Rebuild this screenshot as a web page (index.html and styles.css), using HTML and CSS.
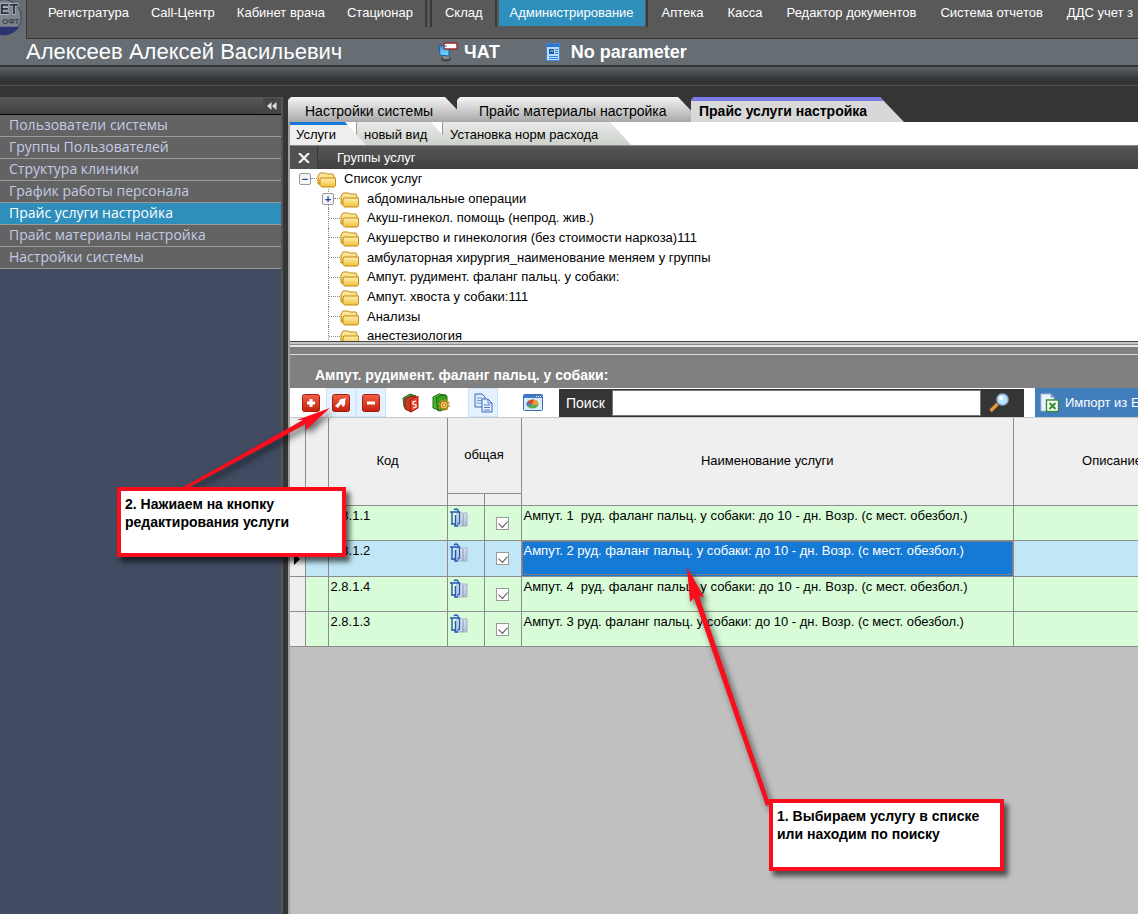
FILE: index.html
```html
<!DOCTYPE html>
<html lang="ru">
<head>
<meta charset="utf-8">
<title>Прайс услуги настройка</title>
<link rel="stylesheet" href="styles.css">
</head>
<body>
<svg class="defs" aria-hidden="true">
  <defs>
    <linearGradient id="gold" x1="0" y1="0" x2="0" y2="1"><stop offset="0" stop-color="#fff0b0"/><stop offset="1" stop-color="#f0c03c"/></linearGradient>
    <linearGradient id="red" x1="0" y1="0" x2="0" y2="1"><stop offset="0" stop-color="#f0604a"/><stop offset="1" stop-color="#c4200c"/></linearGradient>
    <linearGradient id="screen" x1="0" y1="0" x2="0" y2="1"><stop offset="0" stop-color="#2c8fe0"/><stop offset="1" stop-color="#7ce0ff"/></linearGradient>
    <linearGradient id="page" x1="0" y1="0" x2="1" y2="1"><stop offset="0" stop-color="#f4f7fc"/><stop offset="1" stop-color="#a9b9d6"/></linearGradient>
    <symbol id="folder" viewBox="0 0 20 16">
      <path d="M1 12V4l2-3h5l2 1h6l1 2v8z" fill="url(#gold)" stroke="#c58a14"/>
      <path d="M4 6h14.500v7.500l-1 1.500H4.500L3 13.500V7z" fill="url(#gold)" stroke="#c58a14"/>
    </symbol>
    <symbol id="clip" viewBox="0 0 18 20">
      <path d="M7 5h10v13H7z" fill="url(#page)" stroke="#a3b1ca"/><path d="M13 6v12" stroke="#8796b8"/>
      <path d="M2 4v12M0 4h9.500v10q0 2-2 2M5.500 7v10M1 16h4v2h3M4 2q2-2 4 0v2" fill="none" stroke="#2456b4" stroke-width="1.400"/>
    </symbol>
  </defs>
</svg>

<header class="top">
  <svg class="logo" viewBox="0 0 27 38" role="img" aria-label="ВЕТ СОФТ">
    <circle cx="4" cy="17" r="18" fill="#7d848b" stroke="#3a4150"/>
    <path d="M-13 27H20A19 19 0 0 1-10 30z" fill="#2b3470"/>
    <text x="19" y="14" text-anchor="end" class="logo-big">ЕТ</text>
    <text x="20" y="24" text-anchor="end" class="logo-small">ОФТ</text>
  </svg>
  <nav class="menu">
    <a href="#">Регистратура</a><a href="#">Call-Центр</a><a href="#">Кабинет врача</a><a href="#">Стационар</a>
    <span class="sep"></span><span class="sep"></span>
    <a href="#">Склад</a>
    <span class="sep"></span><a href="#" class="current">Администрирование</a><span class="sep"></span>
    <a href="#" class="wide">Аптека</a><a href="#" class="wide">Касса</a><a href="#" class="wide">Редактор документов</a><a href="#" class="wide">Система отчетов</a><a href="#" class="wide">ДДС учет з</a>
  </nav>
</header>
<div class="userbar">
  <strong class="user">Алексеев Алексей Васильевич</strong>
  <button class="ubtn">
    <svg width="20" height="20" viewBox="0 0 20 20"><ellipse cx="8" cy="17" rx="5" ry="2.500" fill="#444"/><path d="M5 13h6v4H5z" fill="#888"/><path d="M1 4l10-1v11l-9-1z" fill="url(#screen)" stroke="#1d5da0"/><rect x="6" y="1" width="13" height="6" rx="1.500" fill="#fff" stroke="#a02a2a" stroke-width="1.400"/><path d="M8 3v2" stroke="#2a5fc0"/></svg>
    ЧАТ</button>
  <button class="ubtn param">
    <svg width="15" height="18" viewBox="0 0 15 18"><path d="M.5.500h13v17H.500z" fill="#b9dcff" stroke="#3f86d8"/><path d="M1 1h12v3H1z" fill="#2f74d0"/><path d="M3 6h5v5H3z" fill="#1c58b0"/><path d="M4 9l2-2 1 2" stroke="#9be05a" fill="none"/><path d="M9 6.500h3M9 8.500h3M9 10.500h3M3 13.500h9M3 15.500h9" stroke="#3b7ed0"/></svg>
    No parameter</button>
</div>
<div class="ribbon"></div>

<div class="work">
  <aside class="side">
    <div class="side-head"><button aria-label="Свернуть"><svg width="10" height="8" viewBox="0 0 10 8"><path d="M4.500 0v8L0 4zM9.500 0v8L5 4z" fill="#ddd"/></svg></button></div>
    <nav class="side-list">
      <a href="#">Пользователи системы</a>
      <a href="#">Группы Пользователей</a>
      <a href="#">Структура клиники</a>
      <a href="#">График работы персонала</a>
      <a href="#" class="current">Прайс услуги настройка</a>
      <a href="#">Прайс материалы настройка</a>
      <a href="#">Настройки системы</a>
    </nav>
  </aside>

  <main class="main">
    <div class="tabs">
      <button class="tab t1">Настройки системы</button>
      <button class="tab t2">Прайс материалы настройка</button>
      <button class="tab t3 active">Прайс услуги настройка</button>
    </div>
    <div class="panel">
      <div class="subtabs">
        <button class="stab s1 active">Услуги</button>
        <button class="stab s2">новый вид</button>
        <button class="stab s3">Установка норм расхода</button>
      </div>
      <div class="group-head">
        <button aria-label="Закрыть"><svg width="12" height="10" viewBox="0 0 12 10"><path d="M1 0l10 10M11 0L1 10" stroke="#eee" stroke-width="2.400"/></svg></button>
        <span>Группы услуг</span>
      </div>
      <div class="tree">
        <ul>
          <li class="root"><button class="pm" aria-label="Свернуть">−</button><i class="dots"></i><svg class="fold"><use href="#folder"/></svg>Список услуг</li>
          <li><button class="pm" aria-label="Развернуть">+</button><i class="dots"></i><svg class="fold"><use href="#folder"/></svg>абдоминальные операции</li>
          <li><i class="dots long"></i><svg class="fold"><use href="#folder"/></svg>Акуш-гинекол. помощь (непрод. жив.)</li>
          <li><i class="dots long"></i><svg class="fold"><use href="#folder"/></svg>Акушерство и гинекология (без стоимости наркоза)111</li>
          <li><i class="dots long"></i><svg class="fold"><use href="#folder"/></svg>амбулаторная хирургия_наименование меняем у группы</li>
          <li><i class="dots long"></i><svg class="fold"><use href="#folder"/></svg>Ампут. рудимент. фаланг пальц. у собаки:</li>
          <li><i class="dots long"></i><svg class="fold"><use href="#folder"/></svg>Ампут. хвоста у собаки:111</li>
          <li><i class="dots long"></i><svg class="fold"><use href="#folder"/></svg>Анализы</li>
          <li><i class="dots long"></i><svg class="fold"><use href="#folder"/></svg>анестезиология</li>
        </ul>
      </div>
      <div class="splitter"></div>
      <h2 class="title">Ампут. рудимент. фаланг пальц. у собаки:</h2>
      <div class="toolbar">
        <button class="tool" aria-label="Добавить"><svg width="18" height="18" viewBox="0 0 18 18"><rect x=".5" y=".5" width="17" height="17" rx="2" fill="url(#red)" stroke="#a81c0c"/><path d="M9 5v8M5 9h8" stroke="#fff" stroke-width="3"/></svg></button>
        <button class="tool hot" aria-label="Редактировать"><svg width="18" height="18" viewBox="0 0 18 18"><rect x=".5" y=".5" width="17" height="17" rx="2" fill="url(#red)" stroke="#a81c0c"/><path d="M3 12l4-4q0-3 3-3l4-1-1 3q1 4-2 6l-2-3-3 4z" fill="#fff"/></svg></button>
        <button class="tool hot" aria-label="Удалить"><svg width="18" height="18" viewBox="0 0 18 18"><rect x=".5" y=".5" width="17" height="17" rx="2" fill="url(#red)" stroke="#a81c0c"/><path d="M5 9h8" stroke="#fff" stroke-width="3"/></svg></button>
        <button class="tool g1" aria-label="Цены"><svg width="18" height="20" viewBox="0 0 18 20"><path d="M1 5l7-4 6 2-5 3v11l-7-3z" fill="#4a9a34" stroke="#2c6a1c"/><path d="M3 6l6-3 5 1-5 3v12l-6-3z" fill="#c83a28" stroke="#8a1c10"/><path d="M8 7l8-4v12l-7 4z" fill="#f0402a" stroke="#a02010"/><path d="M14 8l-3 1v2l3 1v2l-3 1" stroke="#fff" fill="none" stroke-width="1.300"/></svg></button>
        <button class="tool" aria-label="Настройка справочника"><svg width="18" height="20" viewBox="0 0 18 20"><path d="M1 4l6-3 7 1-5 3v13l-8-3z" fill="#46b52c" stroke="#1f6c12"/><path d="M4 5l6-3 5 1v13l-9 2z" fill="#35a020" stroke="#1f6c12"/><circle cx="12" cy="12" r="4.500" fill="none" stroke="#c8921e" stroke-width="2.600" stroke-dasharray="1.800 1.700"/><circle cx="12" cy="12" r="4" fill="#f5c64a" stroke="#a8761a"/><circle cx="12" cy="12" r="1.500" fill="#fff" stroke="#a8761a"/></svg></button>
        <button class="tool hot g2" aria-label="Копировать"><svg width="19" height="20" viewBox="0 0 19 20"><path d="M1 1h7l3 3v10H1z" fill="#dcebfb" stroke="#3a68b8"/><path d="M3 5h5M3 7.500h5M3 10h5" stroke="#6e9ad8"/><path d="M8 6h6l4 4v9H8z" fill="#e6f1fd" stroke="#3a68b8"/><path d="M14 6v4h4M10 12h6M10 14.500h6M10 17h6" stroke="#4a7ac8" fill="none"/></svg></button>
        <button class="tool g3" aria-label="Отчет"><svg width="20" height="17" viewBox="0 0 20 17"><rect x=".5" y=".5" width="19" height="16" rx="1" fill="#dcebf8" stroke="#3a6ab0"/><path d="M1 1h18v3H1z" fill="#3f78c4"/><path d="M13 2.500h1M15 2.500h1M17 2.500h1" stroke="#fff"/><ellipse cx="9.500" cy="10" rx="6" ry="4.500" fill="#5ab04a"/><path d="M9 11L4 8q3-3 7-2.500z" fill="#e04434"/><path d="M9 11l-5 1q-1-2 0-4z" fill="#4a78d8"/><path d="M9 11l2-5.500q5 1 4 5z" fill="#e8a030"/></svg></button>
        <div class="search">
          <label for="q">Поиск</label>
          <input id="q" type="text">
          <button aria-label="Найти"><svg width="20" height="20" viewBox="0 0 20 20"><path d="M1.500 18l7-7" stroke="#e8963a" stroke-width="3.400"/><circle cx="13.500" cy="6.500" r="5.500" fill="#bfe4ff" stroke="#8fb4dc" stroke-width="1.500"/><circle cx="12" cy="5" r="2" fill="#fff"/></svg></button>
        </div>
        <button class="import"><svg width="19" height="20" viewBox="0 0 19 20"><path d="M1 1h10l3 3v14H1z" fill="#eef2fb" stroke="#a9b8dc"/><path d="M11 1v3h3" fill="#8fa4d8" stroke="#7a90c8"/><rect x="6.500" y="7" width="12" height="11.500" fill="#fff" stroke="#2f8f2f" stroke-width="1.400"/><path d="M9.500 10l6 6M15.500 10l-6 6" stroke="#2f8f2f" stroke-width="2"/></svg><span>Импорт из Excel</span></button>
      </div>
      <div class="grid">
        <table>
          <colgroup><col class="c-mark"><col class="c-tag"><col class="c-code"><col class="c-ico"><col class="c-chk"><col class="c-name"><col class="c-desc"></colgroup>
          <thead>
            <tr class="h1"><th rowspan="2"></th><th rowspan="2"></th><th rowspan="2">Код</th><th colspan="2">общая</th><th rowspan="2">Наименование услуги</th><th rowspan="2">Описание</th></tr>
            <tr class="h2"><th></th><th></th></tr>
          </thead>
          <tbody>
            <tr><th></th><td></td><td>2.8.1.1</td><td><svg class="clip"><use href="#clip"/></svg></td><td class="chk"><input type="checkbox" checked aria-label="общая"></td><td>Ампут. 1&nbsp; руд. фаланг пальц. у собаки: до 10 - дн. Возр. (с мест. обезбол.)</td><td></td></tr>
            <tr class="sel"><th class="cur"></th><td></td><td>2.8.1.2</td><td><svg class="clip"><use href="#clip"/></svg></td><td class="chk"><input type="checkbox" checked aria-label="общая"></td><td class="focus">Ампут. 2 руд. фаланг пальц. у собаки: до 10 - дн. Возр. (с мест. обезбол.)</td><td></td></tr>
            <tr><th></th><td></td><td>2.8.1.4</td><td><svg class="clip"><use href="#clip"/></svg></td><td class="chk"><input type="checkbox" checked aria-label="общая"></td><td>Ампут. 4&nbsp; руд. фаланг пальц. у собаки: до 10 - дн. Возр. (с мест. обезбол.)</td><td></td></tr>
            <tr><th></th><td></td><td>2.8.1.3</td><td><svg class="clip"><use href="#clip"/></svg></td><td class="chk"><input type="checkbox" checked aria-label="общая"></td><td>Ампут. 3 руд. фаланг пальц. у собаки: до 10 - дн. Возр. (с мест. обезбол.)</td><td></td></tr>
          </tbody>
        </table>
      </div>
    </div>
  </main>
</div>

<svg class="arrows" viewBox="0 0 1138 914" aria-hidden="true">
  <g fill="#fc0d1b" stroke="none">
    <path d="M330 408L306 430 306 424 184 490 178 490 303 420 297 420z"/>
    <path d="M687 567L704 597 699 596 770 804 766 806 694 598 690 602z"/>
  </g>
</svg>
<div class="note note-edit">2. Нажиаем на кнопку<br>редактирования услуги</div>
<div class="note note-pick">1. Выбираем услугу в списке<br>или находим по поиску</div>
</body>
</html>
```
FILE: styles.css
```css
* { box-sizing: border-box; }
html, body { height: 100%; }
body {
  margin: 0;
  display: flex;
  flex-direction: column;
  overflow: hidden;
  position: relative;
  background: #353535;
  color: #000;
  font: 13px/16px "Liberation Sans", Arial, sans-serif;
}
button { font: inherit; color: inherit; border: 0; padding: 0; margin: 0; background: none; white-space: nowrap; }
a { color: inherit; text-decoration: none; }
svg { display: block; flex: none; }
.defs { position: absolute; width: 0; height: 0; }

.top { flex: none; display: flex; height: 39px; background: #666d73; }
.logo { width: 26px; height: 38px; }
.logo-big { font: bold 15px "Liberation Sans", sans-serif; fill: #2c3444; stroke: #d5d9de; stroke-width: 1px; paint-order: stroke; }
.logo-small { font: bold 8px "Liberation Sans", sans-serif; fill: #3c4250; }
.menu { flex: 1; min-width: 0; overflow: hidden; display: flex; align-items: flex-start; background: #595959; border-left: 1px solid #3a3a3a; border-bottom: 1px solid #353535; padding-left: 10px; color: #fff; }
.menu a { height: 26px; line-height: 26px; padding: 0 11px; white-space: nowrap; flex: none; }
.menu .wide { padding: 0 12px; }
.menu .current { background: #2e8fbc; }
.sep { flex: none; width: 2px; height: 27px; margin: 0 2px 0 1px; background: #3a3a3a; }

.userbar { flex: none; height: 26px; background: #666d73; display: flex; align-items: center; padding-left: 26px; color: #fff; white-space: nowrap; }
.user { font-size: 22px; line-height: 24px; font-weight: normal; width: 412px; }
.ubtn { display: flex; align-items: center; gap: 6px; font-size: 18px; line-height: 22px; font-weight: bold; }
.param { margin-left: 46px; gap: 10px; }
.ribbon { flex: none; height: 32px; background: linear-gradient(#353535 0 2px, #5a6066 2px, #50555a 6px, #353535 14px, #353535 20px, #505050 20px 21px, #353535 21px); }

.work { flex: 1; min-height: 0; display: flex; }
.side { flex: none; width: 283px; background: #414b61; border-right: 2px solid #555; border-top: 1px solid #555; }
.side-head { height: 17px; display: flex; justify-content: flex-end; background: linear-gradient(#575757, #404040); border-bottom: 1px solid #000; }
.side-head button { width: 18px; display: flex; align-items: center; justify-content: center; background: #474747; }
.side-list { display: flex; flex-direction: column; font: 14px/20px "Open Sans", "Noto Sans", sans-serif; color: #c3cbe4; }
.side-list a { height: 22px; padding-left: 9px; background: #636363; border-bottom: 1px solid #999; white-space: nowrap; }
.side-list .current { background: #2e8fbc; color: #fff; }

.main { flex: 1; min-width: 0; display: flex; flex-direction: column; margin-left: 5px; }
.tabs, .subtabs { flex: none; display: flex; isolation: isolate; }
.tab { position: relative; height: 25px; background: linear-gradient(#f5f5f5, #a8a8a8); clip-path: polygon(0 3px, 3px 0, calc(100% - 24px) 0, 100% 100%, 0 100%); text-align: left; padding: 2px 0 0 17px; font-size: 14px; }
.t1 { width: 181px; z-index: 2; }
.t2 { width: 245px; margin-left: -12px; padding-left: 22px; z-index: 1; }
.t3 { width: 213px; margin-left: -11px; z-index: 3; }
.tab.active { background: #d8d8d8; border-top: 4px solid #7b7be8; padding: 0 0 2px 8px; font-weight: bold; }
.panel { flex: 1; min-height: 0; display: flex; flex-direction: column; background: #c0c0c0; border-left: 2px solid #a0a0a0; }
.subtabs { height: 24px; background: #fff; border-bottom: 1px solid #888; }
.stab { position: relative; height: 23px; background: linear-gradient(#e8eae8, #cdd1ca); clip-path: polygon(0 0, calc(100% - 21px) 0, 100% 100%, 0 100%); text-align: left; padding: 3px 0 0 7px; border-left: 1px solid #999; }
.s1 { width: 76px; z-index: 3; }
.s2 { width: 96px; margin-left: -10px; z-index: 2; }
.s3 { width: 189px; margin-left: -10px; }
.stab.active { background: #eee; border-top: 3px solid #1679d8; border-left: 0; padding: 0 0 0 6px; }

.group-head { flex: none; height: 23px; display: flex; align-items: center; background: linear-gradient(#555, #414141); color: #fff; }
.group-head button { width: 28px; height: 23px; display: flex; align-items: center; justify-content: center; border-right: 1px solid #383838; background: #505050; }
.group-head span { padding-left: 19px; }
.tree { flex: none; height: 173px; overflow: hidden; background: #fff; border-bottom: 1px solid #444; }
.tree ul { list-style: none; margin: 0; padding: 0; height: 177px; display: flex; flex-direction: column; }
.tree li { flex: 1; display: flex; align-items: center; padding-left: 32px; white-space: nowrap; position: relative; }
.tree li.root { padding-left: 9px; }
.tree li:not(.root)::before { content: ""; position: absolute; left: 38px; top: 0; height: 100%; border-left: 1px dotted #888; }
.pm { position: relative; width: 12px; height: 12px; border: 1px solid #999; border-radius: 2px; background: #f6f6f6; color: #234a9c; font: bold 11px/10px "Liberation Sans", sans-serif; }
.dots { width: 6px; border-top: 1px dotted #888; }
.dots.long { width: 11px; margin-left: 7px; }
.fold { width: 20px; height: 16px; margin-right: 7px; margin-top: 3px; }
.splitter { flex: none; height: 13px; background: linear-gradient(#c4c4c4 0 2px, #8a8a8a 2px 3px, #e6e6e6 3px 5px, #808080 5px 12px, #ddd 12px); }
.title { flex: none; margin: 0; height: 33px; padding: 12px 0 0 25px; background: #808080; color: #fff; font-size: 14px; line-height: 16px; white-space: nowrap; }

.toolbar { flex: none; height: 30px; display: flex; align-items: center; background: #fff; border-bottom: 1px solid #c8c8c8; padding-left: 6px; overflow: hidden; }
.tool { flex: none; width: 30px; height: 29px; display: flex; align-items: center; justify-content: center; border: 1px solid transparent; }
.tool.hot { background: #e5f1fc; border-color: #cfe5fa; }
.g1 { margin-left: 10px; }
.g2 { margin-left: 12px; }
.g3 { margin-left: 20px; }
.search { flex: 1 0 465px; max-width: 465px; margin-left: 11px; height: 28px; display: flex; align-items: center; background: #353535; color: #fff; }
.search label { width: 53px; padding-left: 7px; font-size: 14px; }
.search input { flex: 1; min-width: 0; height: 26px; border: 1px solid #777; padding: 0 4px; background: #fff; font: inherit; }
.search button { width: 43px; height: 28px; display: flex; align-items: center; padding-left: 8px; }
.import { flex: none; height: 30px; margin-left: 11px; padding: 0 12px 0 5px; display: flex; align-items: center; gap: 6px; background: #427ebb; color: #fff; }

.grid { flex: 1; min-height: 0; overflow: hidden; }
table { width: max(100%, 921px); table-layout: fixed; border-collapse: collapse; line-height: 16px; }
.c-mark { width: 15px; }
.c-tag { width: 23px; }
.c-code { width: 119px; }
.c-ico, .c-chk { width: 37px; }
.c-desc { width: 197px; }
th, td { border: 1px solid #8c8c8c; padding: 0; font-weight: normal; }
th { background: #efefef; }
tr > :first-child { border-left: 0; }
.h2 > :first-child { border-left: 1px solid #8c8c8c; }
thead th { border-top: 0; }
.h1 { height: 75px; }
.h2 { height: 12px; }
tbody tr { height: 35px; background: #d8fcd8; }
td { vertical-align: top; padding: 2px 0 0 2px; white-space: nowrap; }
tbody tr.sel { height: 36px; background: #c1e7f7; }
.focus { background: #147ad6; color: #fff; outline: 1px dotted #e08030; outline-offset: -2px; }
.cur { position: relative; }
.cur::after { content: ""; position: absolute; left: 4px; top: 12px; border: 6px solid transparent; border-left-color: #000; border-right: 0; }
.clip { width: 18px; height: 20px; }
td.chk { padding: 11px 0 0 11px; }
.chk input { appearance: none; display: block; margin: 0; width: 13px; height: 13px; border: 1px solid #999; background: #fff; position: relative; }
.chk input:checked::after { content: ""; position: absolute; left: 3px; top: 1px; width: 5px; height: 7px; border: solid #555; border-width: 0 1px 1px 0; transform: rotate(42deg); }

.arrows { position: absolute; left: 0; top: 0; width: 1138px; height: 914px; filter: drop-shadow(3px 4px 3px rgba(0,0,0,.6)); pointer-events: none; }
.note { position: absolute; background: #fff; border: 4px solid #fc0d1b; padding: 4px; font: bold 14px/18px "Liberation Sans", Arial, sans-serif; box-shadow: 4px 5px 5px rgba(0,0,0,.6); white-space: nowrap; }
.note-edit { left: 117px; top: 487px; width: 229px; height: 70px; }
.note-pick { left: 769px; top: 799px; width: 235px; height: 72px; }
```
